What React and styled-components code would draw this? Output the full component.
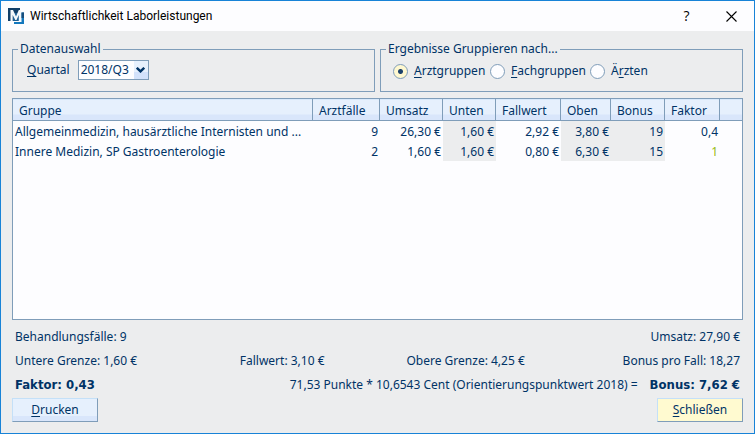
import React, { useState } from 'react'
import styled, { createGlobalStyle } from 'styled-components'

const columns = [
    { key: 'gruppe', title: 'Gruppe' },
    { key: 'arztfaelle', title: 'Arztfälle', width: 67 },
    { key: 'umsatz', title: 'Umsatz', width: 63 },
    { key: 'unten', title: 'Unten', width: 53, shaded: true },
    { key: 'fallwert', title: 'Fallwert', width: 65 },
    { key: 'oben', title: 'Oben', width: 50, shaded: true },
    { key: 'bonus', title: 'Bonus', width: 54, shaded: true },
    { key: 'faktor', title: 'Faktor', width: 55 },
]

const rows = [
    {
        gruppe: 'Allgemeinmedizin, hausärztliche Internisten und ...',
        arztfaelle: '9',
        umsatz: '26,30 €',
        unten: '1,60 €',
        fallwert: '2,92 €',
        oben: '3,80 €',
        bonus: '19',
        faktor: '0,4',
    },
    {
        gruppe: 'Innere Medizin, SP Gastroenterologie',
        arztfaelle: '2',
        umsatz: '1,60 €',
        unten: '1,60 €',
        fallwert: '0,80 €',
        oben: '6,30 €',
        bonus: '15',
        faktor: '1',
    },
]

const groupings = [
    { id: 'arztgruppen', before: '', hotkey: 'A', after: 'rztgruppen' },
    { id: 'fachgruppen', before: '', hotkey: 'F', after: 'achgruppen' },
    { id: 'aerzte', before: 'Ä', hotkey: 'r', after: 'zten' },
]

export default function App() {

    const [quarter, setQuarter] = useState('2018/Q3')
    const [grouping, setGrouping] = useState('arztgruppen')

    return (
        <>
            <GlobalStyle />
            <Dialog>
                <TitleBar>
                    <Logo />
                    <Title>Wirtschaftlichkeit Laborleistungen</Title>
                    <TitleButton type="button" aria-label="Hilfe">?</TitleButton>
                    <TitleButton type="button" aria-label="Fenster schließen">
                        <svg width="11" height="11" viewBox="0 0 11 11" stroke="#000" strokeWidth="1.1">
                            <path d="M.5 .5L10.5 10.5M10.5 .5L.5 10.5" />
                        </svg>
                    </TitleButton>
                </TitleBar>
                <Body>
                    <Filters>
                        <Group>
                            <Legend>Datenauswahl</Legend>
                            <QuarterField>
                                <label htmlFor="quartal"><u>Q</u>uartal</label>
                                <SelectBox>
                                    <Select id="quartal" value={quarter} onChange={(e) => setQuarter(e.target.value)}>
                                        <option>2018/Q3</option>
                                        <option>2018/Q2</option>
                                        <option>2018/Q1</option>
                                    </Select>
                                    <SelectArrow>
                                        <svg width="9" height="6" viewBox="0 0 9 6" fill="none" stroke="#003366" strokeWidth="2.4">
                                            <path d="M.8 .8L4.5 4.4L8.2 .8" />
                                        </svg>
                                    </SelectArrow>
                                </SelectBox>
                            </QuarterField>
                        </Group>
                        <Group>
                            <Legend>Ergebnisse Gruppieren nach...</Legend>
                            <RadioRow>
                                {groupings.map(g => (
                                    <RadioLabel key={g.id}>
                                        <Radio
                                            type="radio"
                                            name="grouping"
                                            checked={grouping === g.id}
                                            onChange={() => setGrouping(g.id)}
                                        />
                                        <span>{g.before}<u>{g.hotkey}</u>{g.after}</span>
                                    </RadioLabel>
                                ))}
                            </RadioRow>
                        </Group>
                    </Filters>

                    <TableFrame>
                        <Table>
                            <colgroup>
                                {columns.map(c => <Col key={c.key} $width={c.width} />)}
                                <Col $width={22} />
                            </colgroup>
                            <thead>
                                <tr>
                                    {columns.map(c => <HeadCell key={c.key}>{c.title}</HeadCell>)}
                                    <HeadCell as="td" $last />
                                </tr>
                            </thead>
                            <tbody>
                                {rows.map(row => (
                                    <tr key={row.gruppe}>
                                        {columns.map(c => (
                                            <Cell
                                                key={c.key}
                                                $left={c.key === 'gruppe'}
                                                $shaded={c.shaded}
                                                $good={c.key === 'faktor' && row.faktor === '1'}
                                            >
                                                {row[c.key]}
                                            </Cell>
                                        ))}
                                        <Cell />
                                    </tr>
                                ))}
                            </tbody>
                        </Table>
                    </TableFrame>

                    <Summary>
                        <SummaryRow>
                            <span>Behandlungsfälle: 9</span>
                            <span>Umsatz: 27,90 €</span>
                        </SummaryRow>
                        <LimitsRow>
                            <span>Untere Grenze: 1,60 €</span>
                            <span>Fallwert: 3,10 €</span>
                            <span>Obere Grenze: 4,25 €</span>
                            <span>Bonus pro Fall: 18,27</span>
                        </LimitsRow>
                        <SummaryRow>
                            <Strong>Faktor: 0,43</Strong>
                            <Formula>
                                <span>71,53 Punkte * 10,6543 Cent (Orientierungspunktwert 2018) =</span>
                                <Strong>Bonus: 7,62 €</Strong>
                            </Formula>
                        </SummaryRow>
                    </Summary>

                    <Actions>
                        <Button type="button"><u>D</u>rucken</Button>
                        <Button type="button" $primary><u>S</u>chließen</Button>
                    </Actions>
                </Body>
            </Dialog>
        </>
    )
}

function Logo() {
    return (
        <svg width="16" height="16" viewBox="0 0 16 16" aria-hidden="true">
            <path d="M0 0H12V13H0Z" fill="#123f68" />
            <path d="M5 5H12V13H5Z" fill="#1d5f94" />
            <path d="M2.500 13V2H5L8 8.500L10.800 2H13V13H10.800V7L8.500 12H7.300L4.700 7V13Z" fill="#f4f8fb" />
            <path d="M13.500 4.500H16V16H6V14H13.500Z" fill="#1478bd" />
            <path d="M13.500 4.500H16V10H13.500Z" fill="#164d7c" />
        </svg>
    )
}

const GlobalStyle = createGlobalStyle`
    * {
        box-sizing: border-box;
    }
    body {
        margin: 0;
        color: #003366;
        font: 12px/16px "Noto Sans", sans-serif;
    }
    u {
        text-decoration-thickness: 1px;
        text-underline-offset: 2px;
        text-decoration-skip-ink: none;
    }
`
const Dialog = styled.div`
    display: flex;
    flex-direction: column;
    min-height: 100vh;
    border: 1px solid #1883d7;
    background: #ecedee;
`
const TitleBar = styled.header`
    display: flex;
    align-items: center;
    height: 30px;
    padding-left: 7px;
    background: #fdfdff;
    color: #000;
`
const Title = styled.h1`
    flex: 1;
    margin: 0 0 0 6px;
    font: 12px/16px Roboto, sans-serif;
`
const TitleButton = styled.button`
    display: flex;
    align-items: center;
    justify-content: center;
    width: 45px;
    height: 30px;
    padding: 0;
    border: none;
    background: none;
    color: #000;
    font: 14px/16px "Open Sans", sans-serif;
`
const Body = styled.main`
    flex: 1;
    display: flex;
    flex-direction: column;
    padding: 10px 11px 11px;
`
const Filters = styled.div`
    display: grid;
    grid-template-columns: 1fr 1fr;
    gap: 5px;
    margin-bottom: 6px;
`
const Group = styled.fieldset`
    min-width: 0;
    height: 51px;
    margin: 0;
    padding: 0 5px;
    border: 1px solid #7f9db9;
`
const Legend = styled.legend`
    padding: 0 2px;
`
const QuarterField = styled.div`
    display: flex;
    align-items: center;
    gap: 8px;
    padding: 3px 0 0 9px;
`
const SelectBox = styled.div`
    position: relative;
    display: flex;
`
const Select = styled.select`
    appearance: none;
    width: 71px;
    height: 20px;
    padding: 0 16px 0 2px;
    border: 1px solid #7f9db9;
    border-radius: 0;
    background: #fdfdff;
    color: inherit;
    font: inherit;
`
const SelectArrow = styled.span`
    position: absolute;
    top: 1px;
    right: 1px;
    bottom: 1px;
    display: flex;
    align-items: center;
    justify-content: center;
    width: 14px;
    background: linear-gradient(#e6f0fd 60%, #d3e2fb 60%);
    pointer-events: none;
`
const RadioRow = styled.div`
    display: grid;
    grid-template-columns: 97px 100px auto;
    padding: 6px 0 0 7px;
`
const RadioLabel = styled.label`
    display: flex;
    align-items: center;
    gap: 6px;
`
const Radio = styled.input`
    appearance: none;
    width: 15px;
    height: 15px;
    margin: 0;
    border: 1px solid #7f9db9;
    border-radius: 50%;
    background: #fdfdff;
    &:checked {
        background: radial-gradient(circle, #1c426b 2px, #fff8d0 3px);
    }
`
const TableFrame = styled.div`
    flex: 1;
    border: 1px solid #7f9db9;
    background: #fdfdff;
`
const Table = styled.table`
    width: 100%;
    table-layout: fixed;
    border-collapse: separate;
    border-spacing: 0;
`
const Col = styled.col`
    width: ${({ $width }) => $width ? `${$width}px` : "auto"};
`
const HeadCell = styled.th`
    height: 22px;
    padding: 2px 0 0 6px;
    border-right: ${({ $last }) => $last ? "none" : "1px solid #7f9db9"};
    border-bottom: 1px solid #7f9db9;
    background: linear-gradient(#d8e9fb 1px, #e6f0fd 1px, #e6f0fd 15px, #d9e6fb 16px);
    font-weight: normal;
    text-align: left;
`
const Cell = styled.td`
    height: 20px;
    padding: 2px 2px 0;
    overflow: hidden;
    background: ${({ $shaded }) => $shaded ? "#ecedee" : "none"};
    color: ${({ $good }) => $good ? "#99bb11" : "inherit"};
    text-align: ${({ $left }) => $left ? "left" : "right"};
    white-space: nowrap;
`
const Summary = styled.section`
    display: grid;
    gap: 8px;
    padding: 9px 3px 5px;
`
const SummaryRow = styled.div`
    display: flex;
    justify-content: space-between;
`
const LimitsRow = styled.div`
    display: grid;
    grid-template-columns: 31% 23% 1fr auto;
`
const Formula = styled.div`
    display: flex;
    gap: 12px;
`
const Strong = styled.strong`
    font: bold 13px/16px "DejaVu Sans Condensed", sans-serif;
`
const Actions = styled.footer`
    display: flex;
    justify-content: space-between;
`
const Button = styled.button`
    width: 86px;
    height: 24px;
    padding: 0;
    border: 1px solid;
    border-color: #c4e0f8 #7f9db9 #7f9db9 #c4e0f8;
    background: ${({ $primary }) => $primary ? "#fffad0" : "linear-gradient(#e6f0fd 75%, #d9e6fb 75%)"};
    color: inherit;
    font: inherit;
`
